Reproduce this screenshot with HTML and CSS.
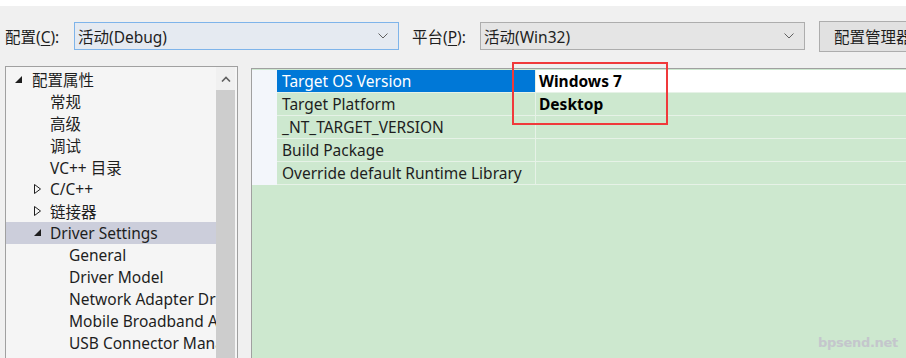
FILE: index.html
```html
<!DOCTYPE html>
<html lang="zh-CN">
<head>
<meta charset="utf-8">
<link rel="stylesheet" href="styles.css">
</head>
<body>
<div class="topstrip"></div>
<div class="toolbar">
  <span class="label label-cfg">配置(<u>C</u>):</span>
  <div class="combo combo-active">
    <span>活动(Debug)</span>
    <svg class="chev" width="10" height="6" viewBox="0 0 10 6"><path d="M0.5 0.5 L5 5 L9.5 0.5" fill="none" stroke="#606060" stroke-width="1"/></svg>
  </div>
  <span class="label label-plat">平台(<u>P</u>):</span>
  <div class="combo">
    <span>活动(Win32)</span>
    <svg class="chev" width="10" height="6" viewBox="0 0 10 6"><path d="M0.5 0.5 L5 5 L9.5 0.5" fill="none" stroke="#606060" stroke-width="1"/></svg>
  </div>
  <div class="button">配置管理器(O)...</div>
</div>
<div class="main">
  <div class="treepanel">
    <div class="tree">
      <div class="row l0"><svg class="tri" width="8" height="8" viewBox="0 0 8 8"><path d="M7 0 L7 7 L0 7 Z" fill="#1e1e1e"/></svg><span>配置属性</span></div>
      <div class="row l1"><span>常规</span></div>
      <div class="row l1"><span>高级</span></div>
      <div class="row l1"><span>调试</span></div>
      <div class="row l1"><span>VC++ 目录</span></div>
      <div class="row l1t"><svg class="tri" width="8" height="10" viewBox="0 0 8 10"><path d="M0.5 0.5 L6.5 5 L0.5 9.5 Z" fill="none" stroke="#1e1e1e" stroke-width="1"/></svg><span>C/C++</span></div>
      <div class="row l1t"><svg class="tri" width="8" height="10" viewBox="0 0 8 10"><path d="M0.5 0.5 L6.5 5 L0.5 9.5 Z" fill="none" stroke="#1e1e1e" stroke-width="1"/></svg><span>链接器</span></div>
      <div class="row l1t sel"><svg class="tri" width="8" height="8" viewBox="0 0 8 8"><path d="M7 0 L7 7 L0 7 Z" fill="#1e1e1e"/></svg><span>Driver Settings</span></div>
      <div class="row l2"><span>General</span></div>
      <div class="row l2"><span>Driver Model</span></div>
      <div class="row l2"><span>Network Adapter Driver</span></div>
      <div class="row l2"><span>Mobile Broadband Adapter</span></div>
      <div class="row l2"><span>USB Connector Manager</span></div>
    </div>
    <div class="scrollbar">
      <div class="sb-up"><svg width="10" height="6" viewBox="0 0 10 6"><path d="M1 5.5 L5 1.5 L9 5.5" fill="none" stroke="#606060" stroke-width="1.6"/></svg></div>
      <div class="sb-thumb"></div>
    </div>
  </div>
  <div class="gridpanel">
    <div class="grid">
      <div class="gutter"></div><div class="name selname">Target OS Version</div><div class="val selval">Windows 7</div>
      <div class="gutter"></div><div class="name">Target Platform</div><div class="val bold">Desktop</div>
      <div class="gutter"></div><div class="name">_NT_TARGET_VERSION</div><div class="val"></div>
      <div class="gutter"></div><div class="name">Build Package</div><div class="val"></div>
      <div class="gutter"></div><div class="name">Override default Runtime Library</div><div class="val"></div>
    </div>
  </div>
</div>
<div class="redbox"></div>
<div class="watermark">bpsend.net</div>
</body>
</html>
```
FILE: styles.css
```css
html, body {
  margin: 0;
  padding: 0;
}
body {
  width: 906px;
  height: 358px;
  overflow: hidden;
  background: #f0f0f0;
  font-family: "Noto Sans", "Noto Sans CJK SC", sans-serif;
  font-size: 15.5px;
  color: #1e1e1e;
  position: relative;
}
.topstrip {
  height: 6px;
  background: #ffffff;
}
.toolbar {
  height: 60px;
  display: flex;
  align-items: center;
  white-space: nowrap;
}
.toolbar > * {
  flex: none;
}
.label {
  display: block;
  box-sizing: border-box;
}
.label u {
  text-decoration: underline;
  text-underline-offset: 2px;
}
.label-cfg {
  width: 74px;
  padding-left: 5px;
}
.label-plat {
  width: 68px;
  margin-left: 13px;
}
.combo {
  box-sizing: border-box;
  width: 325px;
  height: 28px;
  border: 1px solid #adadad;
  background: #e5e5e5;
  display: flex;
  align-items: center;
  justify-content: space-between;
  padding: 0 10px 0 3px;
}
.combo-active {
  border-color: #7eb4ea;
  background: #e5eaf1;
}
.chev {
  display: block;
}
.button {
  box-sizing: border-box;
  margin-left: 14px;
  height: 31px;
  border: 1px solid #adadad;
  background: #e1e1e1;
  padding: 0 14px;
  display: flex;
  align-items: center;
}
.main {
  display: flex;
  padding-left: 5px;
  gap: 13px;
}
.treepanel {
  box-sizing: border-box;
  flex: none;
  width: 233px;
  height: 300px;
  border: 1px solid #a0a0a0;
  background: #f5f5f5;
  display: flex;
  padding: 1px 2px 0 0;
}
.tree {
  width: 210px;
  overflow: hidden;
  white-space: nowrap;
}
.row {
  height: 22px;
  display: flex;
  align-items: center;
  box-sizing: border-box;
}
.row .tri {
  display: block;
  flex: none;
}
.l0 { padding-left: 9px; }
.l0 .tri { margin-right: 9px; margin-top: 1px; }
.l1 { padding-left: 44px; }
.l1t { padding-left: 28px; }
.l1t .tri { margin-right: 8px; }
.l2 { padding-left: 63px; }
.sel { background: #cccedb; }
.scrollbar {
  width: 19px;
  display: flex;
  flex-direction: column;
  background: #f0f0f0;
  margin-top: -1px;
}
.sb-up {
  height: 23px;
  display: flex;
  align-items: center;
  justify-content: center;
}
.sb-up svg { display: block; }
.sb-thumb {
  flex: 1;
  background: #cdcdcd;
}
.gridpanel {
  box-sizing: border-box;
  flex: 1;
  margin-top: 2px;
  height: 300px;
  border-left: 1px solid #a0a0a0;
  border-top: 1px solid #a0a0a0;
  background: #cde8cf;
  padding-top: 1px;
}
.grid {
  display: grid;
  grid-template-columns: 25px 258px 1fr;
  grid-auto-rows: 22px;
  row-gap: 1px;
  background: #e6f2e7;
  padding-bottom: 1px;
}
.gutter {
  background: #f3f6fb;
  margin-bottom: -1px;
}
.name {
  background: #cde8cf;
  padding-left: 5px;
  display: flex;
  align-items: center;
  white-space: nowrap;
  overflow: hidden;
}
.val {
  background: #cde8cf;
  margin-left: 1px;
  padding-left: 3px;
  display: flex;
  align-items: center;
  font-weight: bold;
  white-space: nowrap;
}
.selname {
  background: #0078d7;
  color: #ffffff;
}
.selval {
  background: #ffffff;
  color: #000000;
}
.bold { color: #000000; }
.redbox {
  position: absolute;
  left: 512px;
  top: 62px;
  width: 152px;
  height: 59px;
  border: 2px solid #f0393b;
}
.watermark {
  position: absolute;
  left: 818px;
  top: 335px;
  font-family: "DejaVu Sans", sans-serif;
  font-weight: bold;
  font-size: 13px;
  color: #c4c6cc;
  letter-spacing: -0.3px;
}
```
